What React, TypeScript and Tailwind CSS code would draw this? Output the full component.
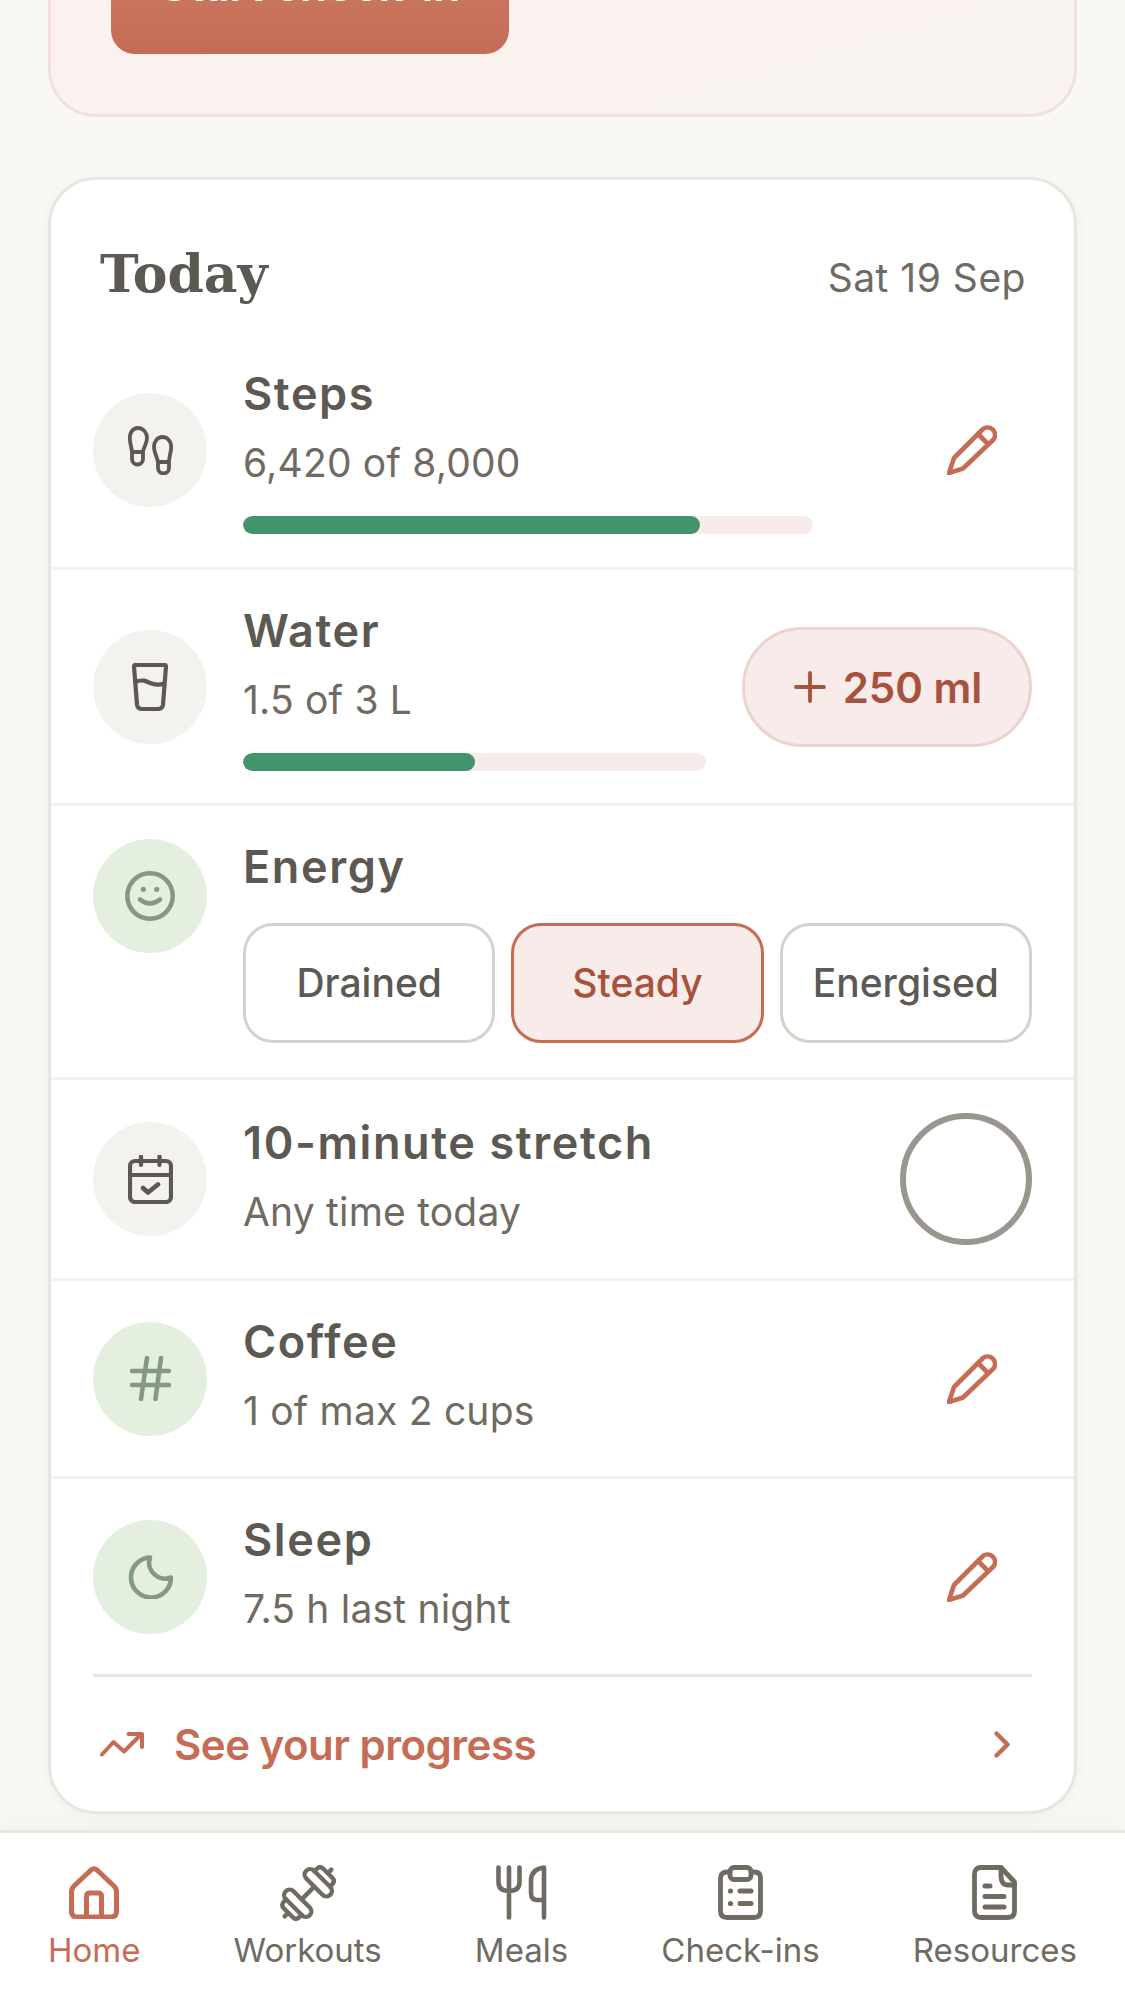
import React from 'react'
import { Plus } from 'lucide-react'

const sans = 'font-["Inter",sans-serif]'

const StepsIcon = () => (
    <svg width="45" height="49" viewBox="0 0 45 49" fill="none" stroke="currentColor" strokeWidth="3.8" strokeLinejoin="round">
        <path d="M10 2C4.5 2 1.8 7 1.8 12C1.8 17 3.5 21 4 26V33A5.5 5.5 0 0 0 15 33V26C15.5 21 19 18 19 12C19 7 15.5 2 10 2ZM4 26H15" />
        <path d="M34.5 11C29 11 26 16 26 21C26 26 29 31 30 36V42A5.5 5.5 0 0 0 41 42V36C41 31 43.2 26 43.2 21C43.2 16 40 11 34.5 11ZM30 36H41" />
    </svg>
)

const GlassIcon = () => (
    <svg width="36" height="48" viewBox="0 0 36 48" fill="none" stroke="currentColor" strokeWidth="4.2" strokeLinejoin="round">
        <path d="M3.5 2H32.5Q34 2 34 3.5L31 41.5Q30.5 46 26 46H10Q5.5 46 5 41.5L2 3.5Q2 2 3.5 2Z" />
        <path d="M3.5 19C10 16 14 18 18 20C23 22 28 22 32.5 20.5" />
    </svg>
)

const SmileIcon = () => (
    <svg width="50" height="50" viewBox="0 0 50 50" fill="none" stroke="currentColor" strokeWidth="4.6" strokeLinecap="round">
        <circle cx="25" cy="25" r="22.7" />
        <circle cx="18.3" cy="18.3" r="2.6" fill="currentColor" stroke="none" />
        <circle cx="31.7" cy="18.3" r="2.6" fill="currentColor" stroke="none" />
        <path d="M15 28.5Q25 36.5 35 28.5" />
    </svg>
)

const CalendarIcon = () => (
    <svg width="45" height="49" viewBox="0 0 45 49" fill="none" stroke="currentColor" strokeWidth="4.2" strokeLinecap="round" strokeLinejoin="round">
        <rect x="2" y="6" width="41" height="41" rx="5" />
        <path d="M2 20H43M13 1.5V10M31.5 1.5V10" />
        <path d="M15 33L20 37.5L30 29.5" strokeWidth="4.8" />
    </svg>
)

const HashIcon = () => (
    <svg width="41" height="45" viewBox="0 0 41 45" fill="none" stroke="currentColor" strokeWidth="4.6" strokeLinecap="round">
        <path d="M2 15H39M2 29H39M17 2L11 43M31 2L25.5 43" />
    </svg>
)

const MoonIcon = () => (
    <svg width="45" height="44" viewBox="0 0 45 44" fill="none" stroke="currentColor" strokeWidth="4.6" strokeLinejoin="round">
        <path d="M22 2.5A20 20 0 1 0 43 22.5A16 16 0 0 1 22 2.5Z" />
    </svg>
)

const PencilIcon = () => (
    <svg width="50" height="50" viewBox="0 0 50 50" fill="none" stroke="currentColor" strokeWidth="4.6" strokeLinejoin="round" strokeLinecap="round">
        <path d="M36 4A7.5 7.5 0 0 1 46.5 14.5L16 43.5L2 48L7 33Z" />
        <path d="M31 9L41 19" />
    </svg>
)

const TrendIcon = () => (
    <svg width="44" height="25" viewBox="0 0 44 25" fill="none" stroke="currentColor" strokeWidth="4" strokeLinecap="round" strokeLinejoin="round" className="ml-[7px] shrink-0">
        <path d="M2 22.5L13.5 10L24 19.5L41 2.5" />
        <path d="M28.5 2H42V15" />
    </svg>
)

const ChevronIcon = () => (
    <svg width="16" height="27" viewBox="0 0 16 27" fill="none" stroke="currentColor" strokeWidth="4.4" strokeLinecap="round" strokeLinejoin="round" className="mr-[22px] shrink-0">
        <path d="M2.5 2.5L13.5 13.5L2.5 24.5" />
    </svg>
)

const HomeIcon = () => (
    <svg width="50" height="53" viewBox="0 0 50 53" fill="none" stroke="currentColor" strokeWidth="5" strokeLinejoin="round">
        <path d="M22 4L5 20Q2.5 22.5 2.5 26V45Q2.5 51 8 51H42Q47.5 51 47.5 45V26Q47.5 22.5 45 20L28 4Q25 1.5 22 4Z" />
        <path d="M17.5 51V30Q17.5 27 21 27H29Q32.5 27 32.5 30V51" />
    </svg>
)

const DumbbellIcon = () => (
    <svg width="56" height="56" viewBox="0 0 56 56" fill="none" stroke="currentColor" strokeWidth="4.4" strokeLinecap="round" strokeLinejoin="round" className="overflow-visible">
        <g transform="rotate(-45 28 28)">
            <path d="M19 28H37" />
            <rect x="8" y="11" width="11" height="34" rx="5.5" />
            <rect x="37" y="11" width="11" height="34" rx="5.5" />
            <path d="M8 17H5Q0 17 0 22V34Q0 39 5 39H8" />
            <path d="M48 17H51Q56 17 56 22V34Q56 39 51 39H48" />
            <path d="M-5 28H0M56 28H61" />
        </g>
    </svg>
)

const UtensilsIcon = () => (
    <svg width="51" height="55" viewBox="0 0 51 55" fill="none" stroke="currentColor" strokeWidth="4.6" strokeLinecap="round" strokeLinejoin="round">
        <path d="M2.5 2.5V17Q2.5 26 13 26Q23.5 26 23.5 17V2.5M13 2.5V52.5" />
        <path d="M48 52.5V2.5Q35 4 35 16V28Q35 35 41 35H48" />
    </svg>
)

const ClipboardIcon = () => (
    <svg width="45" height="55" viewBox="0 0 45 55" fill="none" stroke="currentColor" strokeWidth="4.8" strokeLinecap="round" strokeLinejoin="round">
        <path d="M12 7H9Q2.5 7 2.5 13V46Q2.5 52.5 9 52.5H36Q42.5 52.5 42.5 46V13Q42.5 7 36 7H33" />
        <rect x="12" y="2.5" width="21" height="12" rx="4" />
        <path d="M22 26H33M22 38.5H33" strokeWidth="5" />
        <circle cx="12.5" cy="26" r="2.6" fill="currentColor" stroke="none" />
        <circle cx="12.5" cy="38.5" r="2.6" fill="currentColor" stroke="none" />
    </svg>
)

const FileIcon = () => (
    <svg width="45" height="55" viewBox="0 0 45 55" fill="none" stroke="currentColor" strokeWidth="4.8" strokeLinecap="round" strokeLinejoin="round">
        <path d="M9 2.5H29L42.5 17V46Q42.5 52.5 36 52.5H9Q2.5 52.5 2.5 46V9Q2.5 2.5 9 2.5Z" />
        <path d="M29 2.5V11Q29 20 36 20H42.5" />
        <path d="M13 21H18M13 31.5H32M13 42H32" strokeWidth="5" />
    </svg>
)

type RowProps = {
    icon: React.ReactNode
    green?: boolean
    title: string
    detail?: string
    children?: React.ReactNode
}

const IconCircle = ({ icon, green }: { icon: React.ReactNode; green?: boolean }) => (
    <div
        className={
            green
                ? 'flex h-[114px] w-[114px] shrink-0 items-center justify-center rounded-full bg-[#e5efdf] text-[#84997f]'
                : 'flex h-[114px] w-[114px] shrink-0 items-center justify-center rounded-full bg-[#f3f2ee] text-[#5c5852]'
        }
    >
        {icon}
    </div>
)

const RowText = ({ title, detail }: { title: string; detail?: string }) => (
    <>
        <p className="h-[56px] text-[45px] leading-[56px] font-semibold tracking-[1.6px] text-[#5c5852]">{title}</p>
        {detail && <p className="mt-[14px] h-[54px] text-[39px] leading-[54px] tracking-[0.2px] text-[#6f6a62]">{detail}</p>}
    </>
)

const EditButton = () => (
    <div className="flex h-[120px] w-[120px] shrink-0 items-center justify-center text-[#c66c55]">
        <PencilIcon />
    </div>
)

const Bar = ({ percent }: { percent: number }) => (
    <div className="mt-[26px] h-[18px] overflow-hidden rounded-full bg-[#f7ecea]">
        <div className="h-full rounded-full bg-[#41946b]" style={{ width: `${percent}%` }} />
    </div>
)

const Row = ({ icon, green, title, detail, children }: RowProps) => (
    <div className="flex items-center gap-[36px] border-b-[3px] border-[#f3f2ee] px-[42px] py-[33px]">
        <IconCircle icon={icon} green={green} />
        <div className="min-w-0 flex-1 pb-[5px]">
            <RowText title={title} detail={detail} />
        </div>
        {children}
    </div>
)

const moods = ['Drained', 'Steady', 'Energised']

const navItems = [
    { label: 'Home', icon: <HomeIcon />, active: true },
    { label: 'Workouts', icon: <DumbbellIcon /> },
    { label: 'Meals', icon: <UtensilsIcon /> },
    { label: 'Check-ins', icon: <ClipboardIcon /> },
    { label: 'Resources', icon: <FileIcon /> },
]

export default function App() {
    return (
        <div className={`flex h-[2010px] w-[1125px] flex-col overflow-hidden bg-[#f9f8f4] ${sans}`}>
            <main className="flex-1 overflow-hidden px-[48px]">
                <section className="-mt-[200px] h-[317px] rounded-[48px] border-[3px] border-[#f3e0dc] bg-gradient-to-br from-[#fcf0ee] to-[#f9f4f0] pt-[113px] pl-[60px]">
                    <button className="h-[138px] w-[398px] rounded-[24px] bg-gradient-to-b from-[#d4836d] to-[#c36b55] text-[44px] font-semibold text-white">
                        Start check-in
                    </button>
                </section>

                <section className="mt-[60px] rounded-[48px] border-[3px] border-[#e8e6df] bg-white shadow-[0_3px_12px_rgba(92,88,82,0.05)]">
                    <header className="flex h-[153px] items-center justify-between px-[48px] pt-[34px]">
                        <h2 className='ml-[1px] font-["DejaVu_Serif",serif] text-[52px] font-bold text-[#5c5852]'>Today</h2>
                        <span className="mt-[10px] text-[39px] tracking-[0.5px] text-[#6f6a62]">Sat 19 Sep</span>
                    </header>

                    <div className="flex items-center gap-[36px] border-b-[3px] border-[#f3f2ee] py-[33px] pl-[42px] pr-[42px]">
                        <IconCircle icon={<StepsIcon />} />
                        <div className="w-[570px]">
                            <RowText title="Steps" detail="6,420 of 8,000" />
                            <Bar percent={80.25} />
                        </div>
                        <div className="flex-1" />
                        <EditButton />
                    </div>

                    <div className="flex items-center gap-[36px] border-b-[3px] border-[#f3f2ee] px-[42px] pt-[33px] pb-[32px]">
                        <IconCircle icon={<GlassIcon />} />
                        <div className="min-w-0 flex-1">
                            <RowText title="Water" detail="1.5 of 3 L" />
                            <Bar percent={50} />
                        </div>
                        <button className="flex h-[120px] w-[290px] shrink-0 items-center justify-center gap-[9px] rounded-full border-[3px] border-[#ecd3ce] bg-[#f7ecea] pr-[6px] text-[42px] font-semibold text-[#a8523d]">
                            <Plus size={48} strokeWidth={1.9} />
                            250 ml
                        </button>
                    </div>

                    <div className="flex items-start gap-[36px] border-b-[3px] border-[#f3f2ee] px-[42px] pt-[33px] pb-[34px]">
                        <IconCircle icon={<SmileIcon />} green />
                        <div className="min-w-0 flex-1">
                            <RowText title="Energy" />
                            <div className="mt-[28px] grid grid-cols-3 gap-[16px]">
                                {moods.map((mood) => (
                                    <button
                                        key={mood}
                                        className={
                                            mood === 'Steady'
                                                ? 'h-[120px] rounded-[30px] border-[3px] border-[#c66c55] bg-[#f7ecea] text-[39px] font-medium text-[#a8523d]'
                                                : 'h-[120px] rounded-[30px] border-[3px] border-[#d6d1c9] bg-white text-[39px] font-medium text-[#5c5852]'
                                        }
                                    >
                                        {mood}
                                    </button>
                                ))}
                            </div>
                        </div>
                    </div>

                    <Row icon={<CalendarIcon />} title="10-minute stretch" detail="Any time today">
                        <div className="h-[132px] w-[132px] shrink-0 rounded-full border-[6px] border-[#9a968f]" />
                    </Row>
                    <Row icon={<HashIcon />} green title="Coffee" detail="1 of max 2 cups">
                        <EditButton />
                    </Row>
                    <div className="flex items-center gap-[36px] px-[42px] py-[33px]">
                        <IconCircle icon={<MoonIcon />} green />
                        <div className="min-w-0 flex-1 pb-[5px]">
                            <RowText title="Sleep" detail="7.5 h last night" />
                        </div>
                        <EditButton />
                    </div>

                    <div className="mx-[42px] flex h-[137px] items-center border-t-[3px] border-[#e8e6df] text-[#c66c55]">
                        <TrendIcon />
                        <span className="ml-[28px] flex-1 pl-[2px] text-[42px] font-semibold tracking-[-0.5px]">See your progress</span>
                        <ChevronIcon />
                    </div>
                </section>
            </main>

            <nav className="flex h-[180px] shrink-0 justify-between border-t-[3px] border-[#e8e6df] bg-white px-[48px] pt-[32px] shadow-[0_-6px_16px_rgba(92,88,82,0.04)]">
                {navItems.map((item) => (
                    <div
                        key={item.label}
                        className={
                            item.active
                                ? 'flex flex-col items-center text-[#c66c55]'
                                : 'flex flex-col items-center text-[#6f6a62]'
                        }
                    >
                        <div className="flex h-[55px] items-center justify-center">{item.icon}</div>
                        <span className="mt-[8px] text-[33px] leading-[45px]">{item.label}</span>
                    </div>
                ))}
            </nav>
        </div>
    )
}
